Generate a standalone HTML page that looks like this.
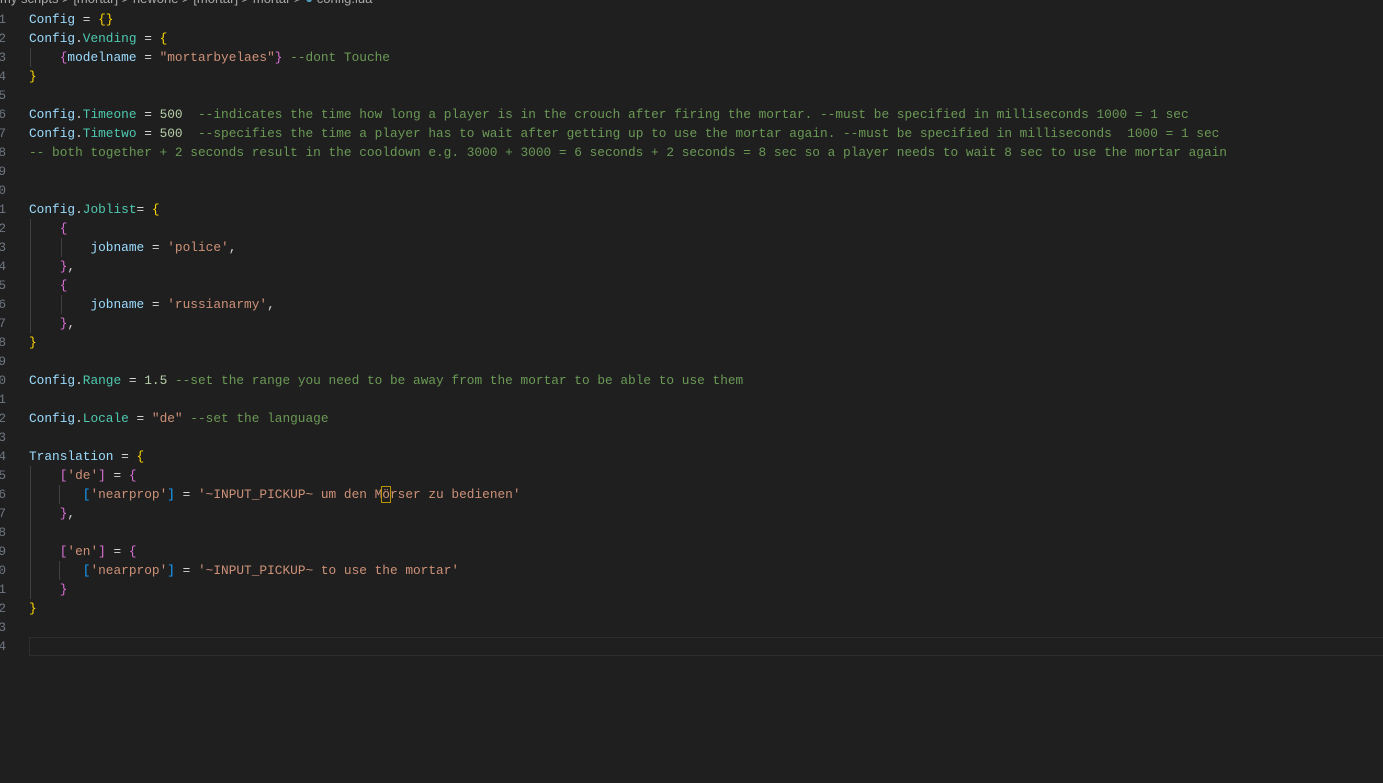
<!DOCTYPE html>
<html><head><meta charset="utf-8"><style>
html,body{margin:0;padding:0;background:#1f1f1f;width:1383px;height:783px;overflow:hidden;}
.bc{position:absolute;left:0;top:-9px;font:13px "Liberation Sans",sans-serif;color:#a9a9a9;white-space:pre;}
.ln{position:absolute;left:-3px;top:10px;font:12.8px/19px "Liberation Mono",monospace;color:#6e7681;white-space:pre;text-align:right;width:9px;}
pre{position:absolute;left:29px;top:10px;margin:0;font:12.8px/19px "Liberation Mono",monospace;color:#d4d4d4;}
.v{color:#9cdcfe}.f{color:#4ec9b0}.n{color:#b5cea8}.c{color:#6a9955}.s{color:#ce9178}
.y{color:#ffd700}.p{color:#da70d6}.b{color:#179fff}
.g{position:absolute;width:1px;background:#404040;}
.cur{position:absolute;left:29px;top:637px;width:1360px;height:17px;border:1px solid #2d2d2d;}
.box{outline:1px solid #b89500;}
</style></head><body>
<div class="bc">my scripts &gt; [mortar] &gt; newone &gt; [mortar] &gt; mortar &gt; <span style="color:#519aba">●</span> config.lua</div>
<div class="ln">1
2
3
4
5
6
7
8
9
0
1
2
3
4
5
6
7
8
9
0
1
2
3
4
5
6
7
8
9
0
1
2
3
4</div>
<div class="cur"></div>
<div class="g" style="left:30px;top:48px;height:19px"></div>
<div class="g" style="left:30px;top:219px;height:114px"></div>
<div class="g" style="left:61px;top:238px;height:19px"></div>
<div class="g" style="left:61px;top:295px;height:19px"></div>
<div class="g" style="left:30px;top:466px;height:133px"></div>
<div class="g" style="left:59px;top:485px;height:19px"></div>
<div class="g" style="left:59px;top:561px;height:19px"></div>
<pre><span class="v">Config</span> = <span class="y">{}</span>
<span class="v">Config</span>.<span class="f">Vending</span> = <span class="y">{</span>
    <span class="p">{</span><span class="v">modelname</span> = <span class="s">"mortarbyelaes"</span><span class="p">}</span> <span class="c">--dont Touche</span>
<span class="y">}</span>

<span class="v">Config</span>.<span class="f">Timeone</span> = <span class="n">500</span>  <span class="c">--indicates the time how long a player is in the crouch after firing the mortar. --must be specified in milliseconds 1000 = 1 sec</span>
<span class="v">Config</span>.<span class="f">Timetwo</span> = <span class="n">500</span>  <span class="c">--specifies the time a player has to wait after getting up to use the mortar again. --must be specified in milliseconds  1000 = 1 sec</span>
<span class="c">-- both together + 2 seconds result in the cooldown e.g. 3000 + 3000 = 6 seconds + 2 seconds = 8 sec so a player needs to wait 8 sec to use the mortar again</span>


<span class="v">Config</span>.<span class="f">Joblist</span>= <span class="y">{</span>
    <span class="p">{</span>
        <span class="v">jobname</span> = <span class="s">'police'</span>,
    <span class="p">}</span>,
    <span class="p">{</span>
        <span class="v">jobname</span> = <span class="s">'russianarmy'</span>,
    <span class="p">}</span>,
<span class="y">}</span>

<span class="v">Config</span>.<span class="f">Range</span> = <span class="n">1.5</span> <span class="c">--set the range you need to be away from the mortar to be able to use them</span>

<span class="v">Config</span>.<span class="f">Locale</span> = <span class="s">"de"</span> <span class="c">--set the language</span>

<span class="v">Translation</span> = <span class="y">{</span>
    <span class="p">[</span><span class="s">'de'</span><span class="p">]</span> = <span class="p">{</span>
       <span class="b">[</span><span class="s">'nearprop'</span><span class="b">]</span> = <span class="s">'~INPUT_PICKUP~ um den M<span class="box">ö</span>rser zu bedienen'</span>
    <span class="p">}</span>,

    <span class="p">[</span><span class="s">'en'</span><span class="p">]</span> = <span class="p">{</span>
       <span class="b">[</span><span class="s">'nearprop'</span><span class="b">]</span> = <span class="s">'~INPUT_PICKUP~ to use the mortar'</span>
    <span class="p">}</span>
<span class="y">}</span>

</pre>
</body></html>
